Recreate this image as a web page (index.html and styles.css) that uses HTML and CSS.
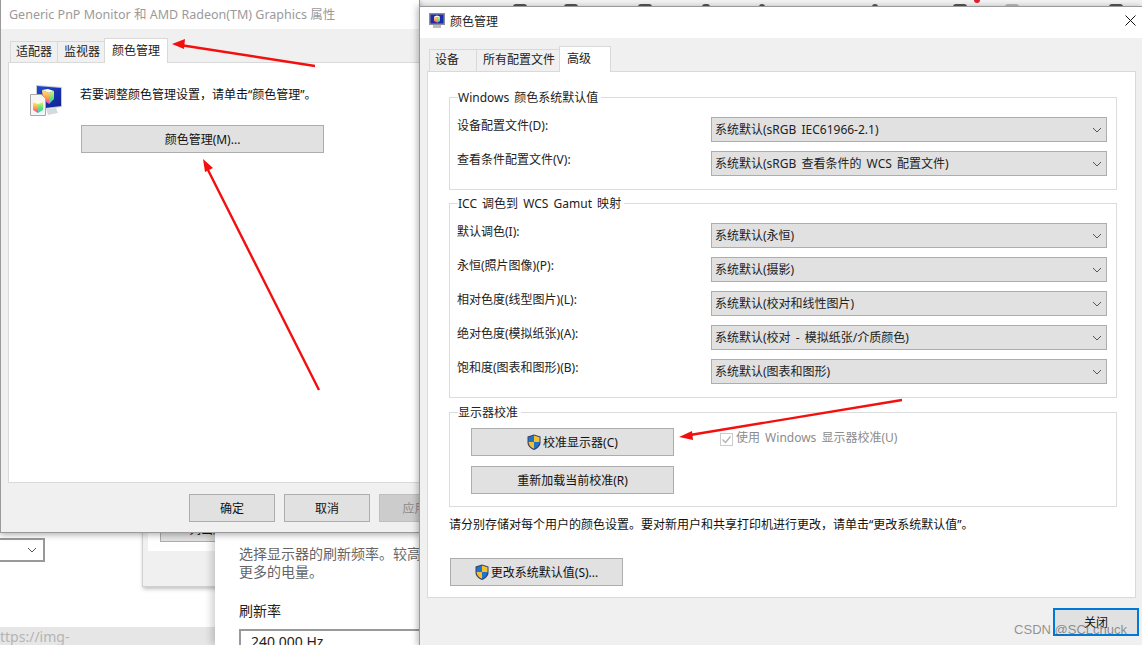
FILE: index.html
```html
<!DOCTYPE html>
<html lang="zh-CN">
<head>
    <meta charset="UTF-8">
    <title>颜色管理</title>
    <link rel="stylesheet" href="styles.css">
</head>
<body>

<div class="desktop">
    <!-- stuff behind the dialogs -->
    <div class="top-icons">
        <span class="blip blip-1"></span>
        <span class="blip blip-2"></span>
        <span class="blip blip-3"></span>
        <span class="blip blip-4"></span>
        <span class="blip blip-5"></span>
        <span class="blip blip-6"></span>
        <span class="blip blip-7"></span>
        <span class="blip blip-8"></span>
        <span class="blip blip-9"></span>
        <span class="red-dot"></span>
    </div>

    <div class="old-select">
        <svg class="chevron" viewBox="0 0 10 6"><path d="M1 1l4 4 4-4"/></svg>
    </div>

    <div class="old-dialog">
        <div class="old-dialog-inner"><div class="old-dialog-btn">列出所有模式</div></div>
    </div>

    <div class="url-bar">ttps://img-</div>

    <div class="settings-panel">
        <p class="settings-text">选择显示器的刷新频率。较高的刷新率可以使动画更流畅，但会消耗</p>
        <p class="settings-text">更多的电量。</p>
        <p class="settings-label">刷新率</p>
        <div class="settings-input">240.000 Hz</div>
    </div>

    <!-- left dialog -->
    <div class="window window-left">
        <div class="titlebar titlebar-left">Generic PnP Monitor 和 AMD Radeon(TM) Graphics 属性</div>
        <div class="window-body">
            <div class="tabs tabs-left">
                <div class="tab">适配器</div>
                <div class="tab">监视器</div>
                <div class="tab active">颜色管理</div>
            </div>
            <div class="panel panel-left">
                <div class="intro">
                    <svg class="color-icon" viewBox="0 0 32 32">
                        <defs>
                            <linearGradient id="cubeLeft" x1="0" y1="0" x2="0" y2="1">
                                <stop offset="0" stop-color="#fff27a"/>
                                <stop offset="0.55" stop-color="#ff9c4a"/>
                                <stop offset="1" stop-color="#e83fb4"/>
                            </linearGradient>
                            <linearGradient id="cubeRight" x1="0" y1="0" x2="0" y2="1">
                                <stop offset="0" stop-color="#e4f76a"/>
                                <stop offset="0.55" stop-color="#5fe07c"/>
                                <stop offset="1" stop-color="#35c8d8"/>
                            </linearGradient>
                            <linearGradient id="screen" x1="0" y1="0" x2="1" y2="1">
                                <stop offset="0" stop-color="#1c49d8"/>
                                <stop offset="1" stop-color="#14208c"/>
                            </linearGradient>
                        </defs>
                        <path d="M6 1l26 2v20l-26 3z" fill="#c3cad2"/>
                        <path d="M7 2l24 2v18l-24 3z" fill="url(#screen)"/>
                        <path d="M12 6l6-1 6 2-5 2z" fill="#fffde0"/>
                        <path d="M12 6l7 3v11l-6-4z" fill="url(#cubeLeft)"/>
                        <path d="M19 9l5-2v8l-5 5z" fill="url(#cubeRight)"/>
                        <path d="M16 25l10-1 2 5-10 2z" fill="#d6dade"/>
                        <path d="M.5 10.500h11l4 4v17h-15z" fill="#f5f5f5" stroke="#a8a8a8"/>
                        <path d="M3 18l5-2 5 2-5 2z" fill="#fffde0"/>
                        <path d="M3 18l5 2v9l-5-3z" fill="url(#cubeLeft)"/>
                        <path d="M8 20l5-2v8l-5 3z" fill="url(#cubeRight)"/>
                    </svg>
                    <span class="intro-text">若要调整颜色管理设置，请单击“颜色管理”。</span>
                </div>
                <div class="btn btn-color">颜色管理(M)...</div>
            </div>
            <div class="footer-left">
                <div class="btn btn-footer">确定</div>
                <div class="btn btn-footer">取消</div>
                <div class="btn btn-footer disabled">应用(A)</div>
            </div>
        </div>
    </div>

    <!-- right dialog -->
    <div class="window window-right">
        <div class="titlebar titlebar-right">
            <svg class="title-icon" viewBox="0 0 16 16">
                <rect x="0" y="0" width="16" height="12" fill="#8b8f94"/>
                <rect x="1.500" y="1.500" width="13" height="9" fill="#1a2bb0"/>
                <path d="M5 3.500l3-1 3 1-3 1.200z" fill="#fffde0"/>
                <path d="M5 3.500l3 1.200v5l-3-1.700z" fill="url(#cubeLeft)"/>
                <path d="M8 4.700l3-1.200v4.500l-3 1.700z" fill="url(#cubeRight)"/>
                <rect x="4" y="12" width="8" height="3" fill="#b9bcc0"/>
            </svg>
            <span class="title-text">颜色管理</span>
            <svg class="close-x" viewBox="0 0 11 11"><path d="M.5.500l10 10M10.500.500l-10 10"/></svg>
        </div>
        <div class="window-body">
            <div class="tabs tabs-right">
                <div class="tab tab-device">设备</div>
                <div class="tab tab-all">所有配置文件</div>
                <div class="tab active tab-advanced">高级</div>
            </div>
            <div class="panel panel-right">
                <div class="group group-defaults">
                    <div class="group-title">Windows 颜色系统默认值</div>
                    <div class="row">
                        <label>设备配置文件(D):</label>
                        <div class="select">系统默认(sRGB IEC61966-2.1)<svg class="chevron" viewBox="0 0 10 6"><path d="M1 1l4 4 4-4"/></svg></div>
                    </div>
                    <div class="row">
                        <label>查看条件配置文件(V):</label>
                        <div class="select">系统默认(sRGB 查看条件的 WCS 配置文件)<svg class="chevron" viewBox="0 0 10 6"><path d="M1 1l4 4 4-4"/></svg></div>
                    </div>
                </div>

                <div class="group group-gamut">
                    <div class="group-title">ICC 调色到 WCS Gamut 映射</div>
                    <div class="row">
                        <label>默认调色(I):</label>
                        <div class="select">系统默认(永恒)<svg class="chevron" viewBox="0 0 10 6"><path d="M1 1l4 4 4-4"/></svg></div>
                    </div>
                    <div class="row">
                        <label>永恒(照片图像)(P):</label>
                        <div class="select">系统默认(摄影)<svg class="chevron" viewBox="0 0 10 6"><path d="M1 1l4 4 4-4"/></svg></div>
                    </div>
                    <div class="row">
                        <label>相对色度(线型图片)(L):</label>
                        <div class="select">系统默认(校对和线性图片)<svg class="chevron" viewBox="0 0 10 6"><path d="M1 1l4 4 4-4"/></svg></div>
                    </div>
                    <div class="row">
                        <label>绝对色度(模拟纸张)(A):</label>
                        <div class="select">系统默认(校对 - 模拟纸张/介质颜色)<svg class="chevron" viewBox="0 0 10 6"><path d="M1 1l4 4 4-4"/></svg></div>
                    </div>
                    <div class="row">
                        <label>饱和度(图表和图形)(B):</label>
                        <div class="select">系统默认(图表和图形)<svg class="chevron" viewBox="0 0 10 6"><path d="M1 1l4 4 4-4"/></svg></div>
                    </div>
                </div>

                <div class="group group-calib">
                    <div class="group-title">显示器校准</div>
                    <div class="calib-row">
                        <div class="btn btn-calib">
                            <svg class="shield" viewBox="0 0 14 16">
                                <path d="M7 .5l6.500 2v6c0 3.500-3 6-6.500 7.500C3.500 14.500.500 12 .500 8.500v-6z" fill="#3a3f66"/>
                                <path d="M7 1.500v6.500h5.500V3.200z" fill="#f5c02e"/>
                                <path d="M7 1.500v6.500H1.500V3.200z" fill="#1f74c8"/>
                                <path d="M7 8v6.800c2.800-1.300 5.300-3.400 5.500-6.800z" fill="#1f74c8"/>
                                <path d="M7 8v6.800C4.200 13.500 1.700 11.400 1.500 8z" fill="#f5c02e"/>
                            </svg>校准显示器(C)
                        </div>
                        <div class="check-wrap">
                            <svg class="checkbox" viewBox="0 0 13 13">
                                <rect x=".5" y=".5" width="12" height="12" fill="#fff" stroke="#ccc"/>
                                <path d="M2.500 6.500l3 3 5-6" fill="none" stroke="#b0b0b0" stroke-width="1.300"/>
                            </svg>
                            <span>使用 Windows 显示器校准(U)</span>
                        </div>
                    </div>
                    <div class="btn btn-calib">重新加载当前校准(R)</div>
                </div>

                <p class="note">请分别存储对每个用户的颜色设置。要对新用户和共享打印机进行更改，请单击“更改系统默认值”。</p>

                <div class="btn btn-change">
                    <svg class="shield" viewBox="0 0 14 16">
                        <path d="M7 .5l6.500 2v6c0 3.500-3 6-6.500 7.500C3.500 14.500.500 12 .500 8.500v-6z" fill="#3a3f66"/>
                        <path d="M7 1.500v6.500h5.500V3.200z" fill="#f5c02e"/>
                        <path d="M7 1.500v6.500H1.500V3.200z" fill="#1f74c8"/>
                        <path d="M7 8v6.800c2.800-1.300 5.300-3.400 5.500-6.800z" fill="#1f74c8"/>
                        <path d="M7 8v6.800C4.200 13.500 1.700 11.400 1.500 8z" fill="#f5c02e"/>
                    </svg>更改系统默认值(S)...
                </div>
            </div>
            <div class="footer-right">
                <div class="btn btn-close">关闭</div>
            </div>
        </div>
    </div>

    <!-- red arrows drawn over the screenshot -->
    <svg class="arrows" viewBox="0 0 1142 645">
        <path d="M315 66L180 45M319 390L208 170M902 400L690 435" fill="none" stroke="#f40f0f" stroke-width="2.400"/>
        <path d="M172 44l13-5-1 10zM203 159l10 9-8 4zM679 437l13-6 1 9z" fill="#f40f0f"/>
    </svg>

    <div class="watermark">CSDN @SCLchuck</div>
</div>

</body>
</html>
```

FILE: styles.css
```css
* {
    box-sizing: border-box;
}

body {
    margin: 0;
    background-color: #fff;
    font-family: "Noto Sans", "Noto Sans CJK SC", sans-serif;
    font-size: 12px;
    color: #111;
}

.desktop {
    position: relative;
    width: 1142px;
    height: 645px;
    overflow: hidden;
    background-color: #fff;
}

/* background bits */
.top-icons {
    position: absolute;
    left: 420px;
    top: 0;
    width: 722px;
    height: 7px;
    background-color: #f3f3f3;
    border-bottom: 1px solid #8a8a8a;
}

.blip {
    position: absolute;
    top: 4px;
    width: 14px;
    height: 3px;
    background-color: #555;
    border-radius: 3px 3px 0 0;
}

.blip-1 { left: 93px; }
.blip-2 { left: 144px; }
.blip-3 { left: 218px; }
.blip-4 { left: 282px; width: 8px; }
.blip-5 { left: 339px; width: 6px; }
.blip-6 { left: 452px; width: 6px; }
.blip-7 { left: 533px; }
.blip-8 { left: 585px; background-color: #bbb; }
.blip-9 { left: 689px; }

.red-dot {
    position: absolute;
    left: 554px;
    top: -3px;
    width: 6px;
    height: 6px;
    border-radius: 50%;
    background-color: #e0202c;
}

.old-select {
    position: absolute;
    left: -10px;
    top: 538px;
    width: 55px;
    height: 24px;
    border: 2px solid #999;
    display: flex;
    justify-content: flex-end;
    align-items: center;
    padding-right: 6px;
}

.old-dialog {
    position: absolute;
    left: 142px;
    top: 525px;
    width: 80px;
    height: 62px;
    background-color: #f0f0f0;
    border: 1px solid #d0d0d0;
    box-shadow: 1px 2px 4px rgba(0, 0, 0, 0.25);
    padding: 0 0 0 5px;
}

.old-dialog-inner {
    height: 25px;
    background-color: #fff;
    padding-left: 12px;
}

.old-dialog-btn {
    height: 16px;
    background-color: #e1e1e1;
    border: 1px solid #adadad;
    line-height: 5px;
    white-space: nowrap;
    overflow: hidden;
    padding-left: 28px;
}

.url-bar {
    position: absolute;
    left: 0;
    top: 627px;
    width: 216px;
    height: 18px;
    background-color: #e6e6e6;
    color: #b4b4b4;
    font-size: 14px;
    line-height: 20px;
}

.settings-panel {
    position: absolute;
    left: 215px;
    top: 532px;
    width: 206px;
    height: 113px;
    background-color: #fff;
    padding: 13px 0 0 24px;
    box-shadow: -3px 0 8px rgba(0, 0, 0, 0.2);
    font-size: 14px;
    line-height: 18px;
    overflow: hidden;
}

.settings-text {
    margin: 0;
    color: #666;
    white-space: nowrap;
}

.settings-label {
    margin: 21px 0 0;
    color: #222;
}

.settings-input {
    width: 220px;
    height: 30px;
    margin-top: 9px;
    border: 2px solid #999;
    padding: 2px 10px;
    color: #222;
    white-space: nowrap;
}

/* dialogs */
.window {
    position: absolute;
    background-color: #f0f0f0;
    border: 1px solid #9a9a9a;
    display: flex;
    flex-direction: column;
    overflow: hidden;
}

.window-left {
    left: 0;
    top: 0;
    width: 420px;
    height: 533px;
    border-top: none;
    box-shadow: 0 2px 6px rgba(0, 0, 0, 0.3);
}

.window-right {
    left: 419px;
    top: 6px;
    width: 724px;
    height: 640px;
    word-spacing: 2px;
    box-shadow: -2px 0 6px rgba(0, 0, 0, 0.25);
}

.titlebar {
    background-color: #fff;
    flex-shrink: 0;
}

.titlebar-left {
    height: 29px;
    padding-left: 8px;
    color: #9a9a9a;
    font-size: 12.5px;
    line-height: 29px;
    white-space: nowrap;
}

.titlebar-right {
    height: 31px;
    display: flex;
    align-items: center;
    padding: 0 0 4px 9px;
}

.title-icon {
    width: 16px;
    height: 16px;
    margin-right: 5px;
}

.title-text {
    flex: 1;
    color: #222;
}

.close-x {
    width: 11px;
    height: 11px;
    margin-right: 6px;
    fill: none;
    stroke: #111;
    stroke-width: 1;
}

.window-body {
    flex: 1;
    display: flex;
    flex-direction: column;
    min-height: 0;
}

/* tabs */
.tabs {
    display: flex;
    align-items: flex-end;
    flex-shrink: 0;
    position: relative;
    z-index: 1;
}

.tabs-left {
    height: 33px;
    padding-left: 9px;
}

.tabs-right {
    height: 34px;
    padding-left: 9px;
    margin-bottom: -1px;
}

.tab {
    padding: 0 5px;
    background-color: #f0f0f0;
    border: 1px solid #d9d9d9;
    border-bottom: none;
    margin-right: -1px;
    line-height: 20px;
    color: #222;
    white-space: nowrap;
}

.tabs-left .tab {
    height: 21px;
}

.tabs-left .tab:nth-child(2) {
    padding: 0 4px 0 6px;
}

.tabs-left .tab.active {
    height: 25px;
    margin-bottom: -1px;
}

.tabs-right .tab {
    height: 22px;
    margin-bottom: 1px;
}

.tabs-right .tab.active {
    height: 26px;
    margin-bottom: 0;
}

.tabs .tab.active {
    background-color: #fff;
    line-height: 24px;
    padding: 0 7px;
}

.tab-device {
    width: 48px;
}

.tabs .tab-all {
    padding: 0 4px 0 6px;
}

.tab-advanced {
    width: 52px;
}

.panel {
    background-color: #fff;
    border: 1px solid #d9d9d9;
}

.panel-left {
    width: 420px;
    height: 421px;
    margin-left: 7px;
    padding: 21px 0 0 21px;
}

.intro {
    display: flex;
    align-items: flex-start;
    height: 32px;
}

.color-icon {
    width: 32px;
    height: 32px;
    margin-right: 18px;
}

.intro-text {
    line-height: 22px;
}

.btn {
    background-color: #e1e1e1;
    border: 1px solid #adadad;
    display: flex;
    align-items: center;
    justify-content: center;
    color: #111;
    white-space: nowrap;
}

.btn-color {
    width: 243px;
    height: 28px;
    margin: 9px 0 0 51px;
}

.footer-left {
    display: flex;
    gap: 9px;
    padding: 11px 0 0 188px;
}

.btn-footer {
    flex-shrink: 0;
    width: 86px;
    height: 28px;
}

.btn-footer.disabled {
    background-color: #ccc;
    border-color: #bfbfbf;
    color: #8a8a8a;
}

.panel-right {
    height: 527px;
    margin: 0 6px 0 7px;
    padding: 25px 18px 0 21px;
}

.group {
    border: 1px solid #dcdcdc;
    padding: 0 9px 0 7px;
}

.group-title {
    width: fit-content;
    margin: -9px 0 11px 1px;
    padding: 0 3px 0 0;
    background-color: #fff;
    line-height: 17px;
    color: #222;
}

.group-defaults {
    height: 93px;
}

.group-gamut {
    height: 195px;
    margin-top: 13px;
}

.group-calib {
    height: 95px;
    margin-top: 14px;
    padding: 0 0 0 21px;
}

.group-calib .group-title {
    margin: -9px 0 0 -13px;
}

.row {
    display: flex;
    justify-content: space-between;
    align-items: flex-start;
    height: 34px;
}

.row label {
    line-height: 17px;
    color: #222;
}

.select {
    position: relative;
    width: 396px;
    height: 25px;
    background-color: #e1e1e1;
    border: 1px solid #adadad;
    padding-left: 3px;
    line-height: 23px;
    color: #222;
}

.select .chevron {
    position: absolute;
    right: 4px;
    top: 9px;
}

.chevron {
    width: 10px;
    height: 6px;
    fill: none;
    stroke: #555;
    stroke-width: 1;
}

.calib-row {
    display: flex;
    align-items: flex-start;
    margin-top: 7px;
    margin-bottom: 10px;
}

.btn-calib {
    width: 203px;
    height: 28px;
    flex-shrink: 0;
}

.shield {
    width: 14px;
    height: 16px;
    margin-right: 2px;
}

.check-wrap {
    display: flex;
    align-items: flex-start;
    margin: 2px 0 0 46px;
    line-height: 16px;
    color: #8c8c8c;
}

.checkbox {
    width: 13px;
    height: 13px;
    margin: 3px 3px 0 0;
}

.note {
    margin: 9px 0 0;
    line-height: 17px;
    white-space: nowrap;
    color: #111;
}

.btn-change {
    width: 173px;
    height: 28px;
    margin: 25px 0 0 1px;
}

.footer-right {
    display: flex;
    justify-content: flex-end;
    padding: 10px 3px 0 0;
}

.btn-close {
    width: 86px;
    height: 28px;
    border: 2px solid #0078d7;
}

/* annotations */
.arrows {
    position: absolute;
    left: 0;
    top: 0;
    width: 1142px;
    height: 645px;
}

.watermark {
    position: absolute;
    right: 15px;
    top: 622px;
    font-family: "Liberation Sans", sans-serif;
    font-size: 13px;
    line-height: 16px;
    color: rgba(90, 90, 90, 0.65);
}
```
